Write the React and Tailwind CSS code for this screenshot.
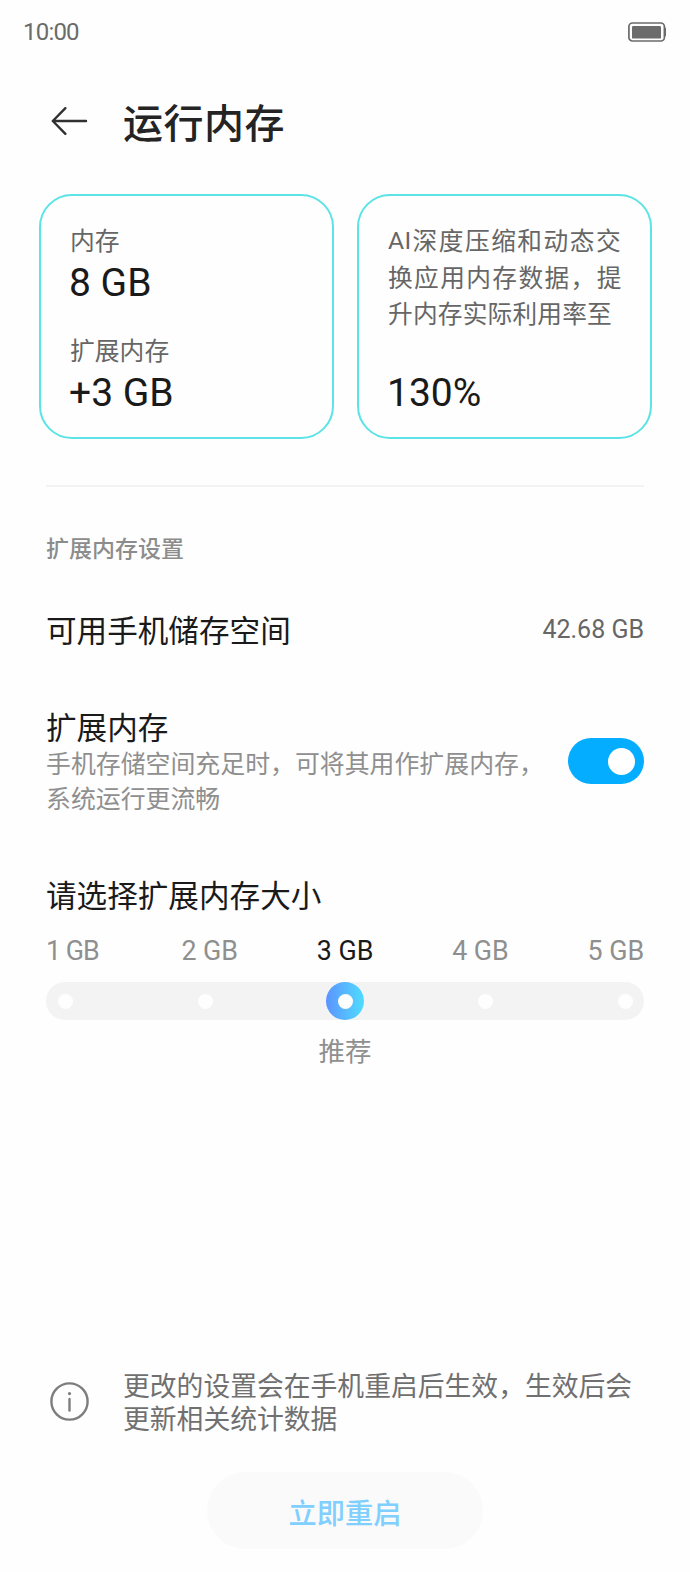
const sizes = ["1 GB", "2 GB", "3 GB", "4 GB", "5 GB"];
const SELECTED = 2;

function StatusBar() {
  return (
    <div className="flex h-[63px] items-center justify-between pl-[23px] pr-[24px] text-[#6b6b6b]">
      <span className="font-['Roboto',sans-serif] text-[24px] leading-[24px] tracking-[-0.8px]">10:00</span>
      <svg width="38" height="20" viewBox="0 0 38 20" fill="none">
        <rect x="0.9" y="1" width="35.5" height="18" rx="3.5" stroke="currentColor" strokeWidth="1.7" />
        <rect x="4" y="4" width="29" height="12.6" rx="1.2" fill="currentColor" />
        <path d="M36.6 5.5h.3a1.1 1.1 0 0 1 1.1 1.2v6.6a1.1 1.1 0 0 1-1.1 1.2h-.3z" fill="currentColor" />
      </svg>
    </div>
  );
}

function Header() {
  return (
    <header className="flex h-[116px] items-center pl-[51px]">
      <svg width="37" height="30" viewBox="0 0 37 30" fill="none" stroke="#303030" strokeWidth="2.4" strokeLinecap="round" strokeLinejoin="round">
        <path d="M35 15H1.8M14.4 2.2 1.8 15l12.6 12.8" />
      </svg>
      <h1 className="ml-[35px] text-[40px] font-medium leading-[40px] tracking-[0.5px] text-[#242424]">运行内存</h1>
    </header>
  );
}

function Card({ children }) {
  return (
    <div className="h-[245px] w-[295px] rounded-[33px] border-2 border-[#5ce3e5] pl-[29px] pt-[25px]">{children}</div>
  );
}

function Value({ children }) {
  return (
    <p className="-ml-[1px] h-[48px] font-['Roboto',sans-serif] text-[39px] leading-[50px]">{children}</p>
  );
}

export default function App() {
  return (
    <div className="flex h-[1572px] w-[690px] flex-col overflow-hidden bg-[#fefefe] font-['Noto_Sans_CJK_SC',sans-serif] text-[#1a1a1a]">
      <StatusBar />
      <Header />

      <section className="mt-[15px] flex gap-[23px] pl-[39px]">
        <Card>
          <p className="text-[24.8px] leading-[37px] text-[#666]">内存</p>
          <Value>8 GB</Value>
          <p className="mt-[24.5px] text-[24.8px] leading-[37px] text-[#666]">扩展内存</p>
          <Value>+3 GB</Value>
        </Card>
        <Card>
          <div className="whitespace-nowrap text-[24.7px] leading-[36.5px] text-[#666]">
            <p className="flex h-[36.5px] items-center tracking-[1.55px]">
              <span className="mr-[1px] mt-[3px] font-['Roboto',sans-serif] tracking-[0.3px]">AI</span>
              <span>深度压缩和动态交</span>
            </p>
            <p className="tracking-[1.4px]">换应用内存数据，提</p>
            <p className="tracking-[0.2px]">升内存实际利用率至</p>
          </div>
          <div className="mt-[37px]">
            <Value>130%</Value>
          </div>
        </Card>
      </section>

      <main className="flex flex-col px-[46px]">
        <hr className="mt-[46px] h-[2px] border-0 bg-[#f3f3f3]" />
        <h2 className="mt-[45px] text-[23px] font-medium leading-[30px] text-[#8c8c8c]">扩展内存设置</h2>

        <div className="mt-[46px] flex h-[42px] items-center justify-between">
          <span className="text-[30.6px] leading-[42px]">可用手机储存空间</span>
          <span className="pt-[2px] font-['Roboto',sans-serif] text-[25px] leading-[38px] text-[#666]">42.68 GB</span>
        </div>

        <div className="mt-[55px] flex items-center justify-between">
          <div>
            <h3 className="text-[30.6px] leading-[42px]">扩展内存</h3>
            <p className="-mt-[2px] whitespace-nowrap text-[24.9px] leading-[34.7px] text-[#8f8f8f]">
              手机存储空间充足时，可将其用作扩展内存，
              <br />
              系统运行更流畅
            </p>
          </div>
          <button className="-ml-5 mt-[3.5px] flex h-[46px] w-[76.5px] shrink-0 items-center justify-end rounded-full bg-[#04adff] pr-[9px]" aria-label="扩展内存">
            <span className="size-[27px] rounded-full bg-white" />
          </button>
        </div>

        <h3 className="mt-[59px] text-[30.6px] leading-[42px]">请选择扩展内存大小</h3>
        <div className="mt-[17px] flex justify-between font-['Roboto',sans-serif] text-[26.8px] leading-[38px]">
          {sizes.map((s, i) => (
            <span
              key={s}
              className={
                i === SELECTED
                  ? "w-[56.5px] whitespace-nowrap text-[#1a1a1a]"
                  : i === 0
                    ? "w-[56.5px] whitespace-nowrap tracking-[-1px] text-[#8f8f8f]"
                    : "w-[56.5px] whitespace-nowrap text-[#8f8f8f]"
              }
            >
              {s}
            </span>
          ))}
        </div>
        <div className="mt-[12px] flex h-[38px] items-center justify-between rounded-full bg-[#f3f3f3]">
          {sizes.map((s, i) => (
            <span
              key={s}
              className={
                i === SELECTED
                  ? "flex size-[38px] items-center justify-center rounded-full bg-linear-to-r from-[#5b93ff] to-[#4fdcff]"
                  : "flex size-[38px] items-center justify-center"
              }
            >
              <span className="size-[15px] rounded-full bg-[#fefefe]" />
            </span>
          ))}
        </div>
        <p className="mt-[11px] text-center text-[26.5px] leading-[38px] text-[#8f8f8f]">推荐</p>
      </main>

      <footer className="mt-auto flex flex-col pb-[23px]">
        <div className="flex items-center pl-[50px]">
          <svg className="mt-[1px]" width="39" height="39" viewBox="0 0 39 39" fill="none">
            <circle cx="19.5" cy="19.5" r="18.1" stroke="#7d7d7d" strokeWidth="2.4" />
            <circle cx="19.5" cy="11.6" r="1.6" fill="#7d7d7d" />
            <path d="M19.5 17v11.6" stroke="#7d7d7d" strokeWidth="2.4" strokeLinecap="round" />
          </svg>
          <p className="ml-[34px] whitespace-nowrap pt-[1px] text-[26.8px] leading-[32.6px] text-[#707070]">
            更改的设置会在手机重启后生效，生效后会
            <br />
            更新相关统计数据
          </p>
        </div>
        <button className="mt-[37.5px] h-[77px] w-[276px] self-center rounded-full bg-[#fafafa] pt-[3px] text-[28.2px] font-medium text-[#80cfff]">立即重启</button>
      </footer>
    </div>
  );
}
